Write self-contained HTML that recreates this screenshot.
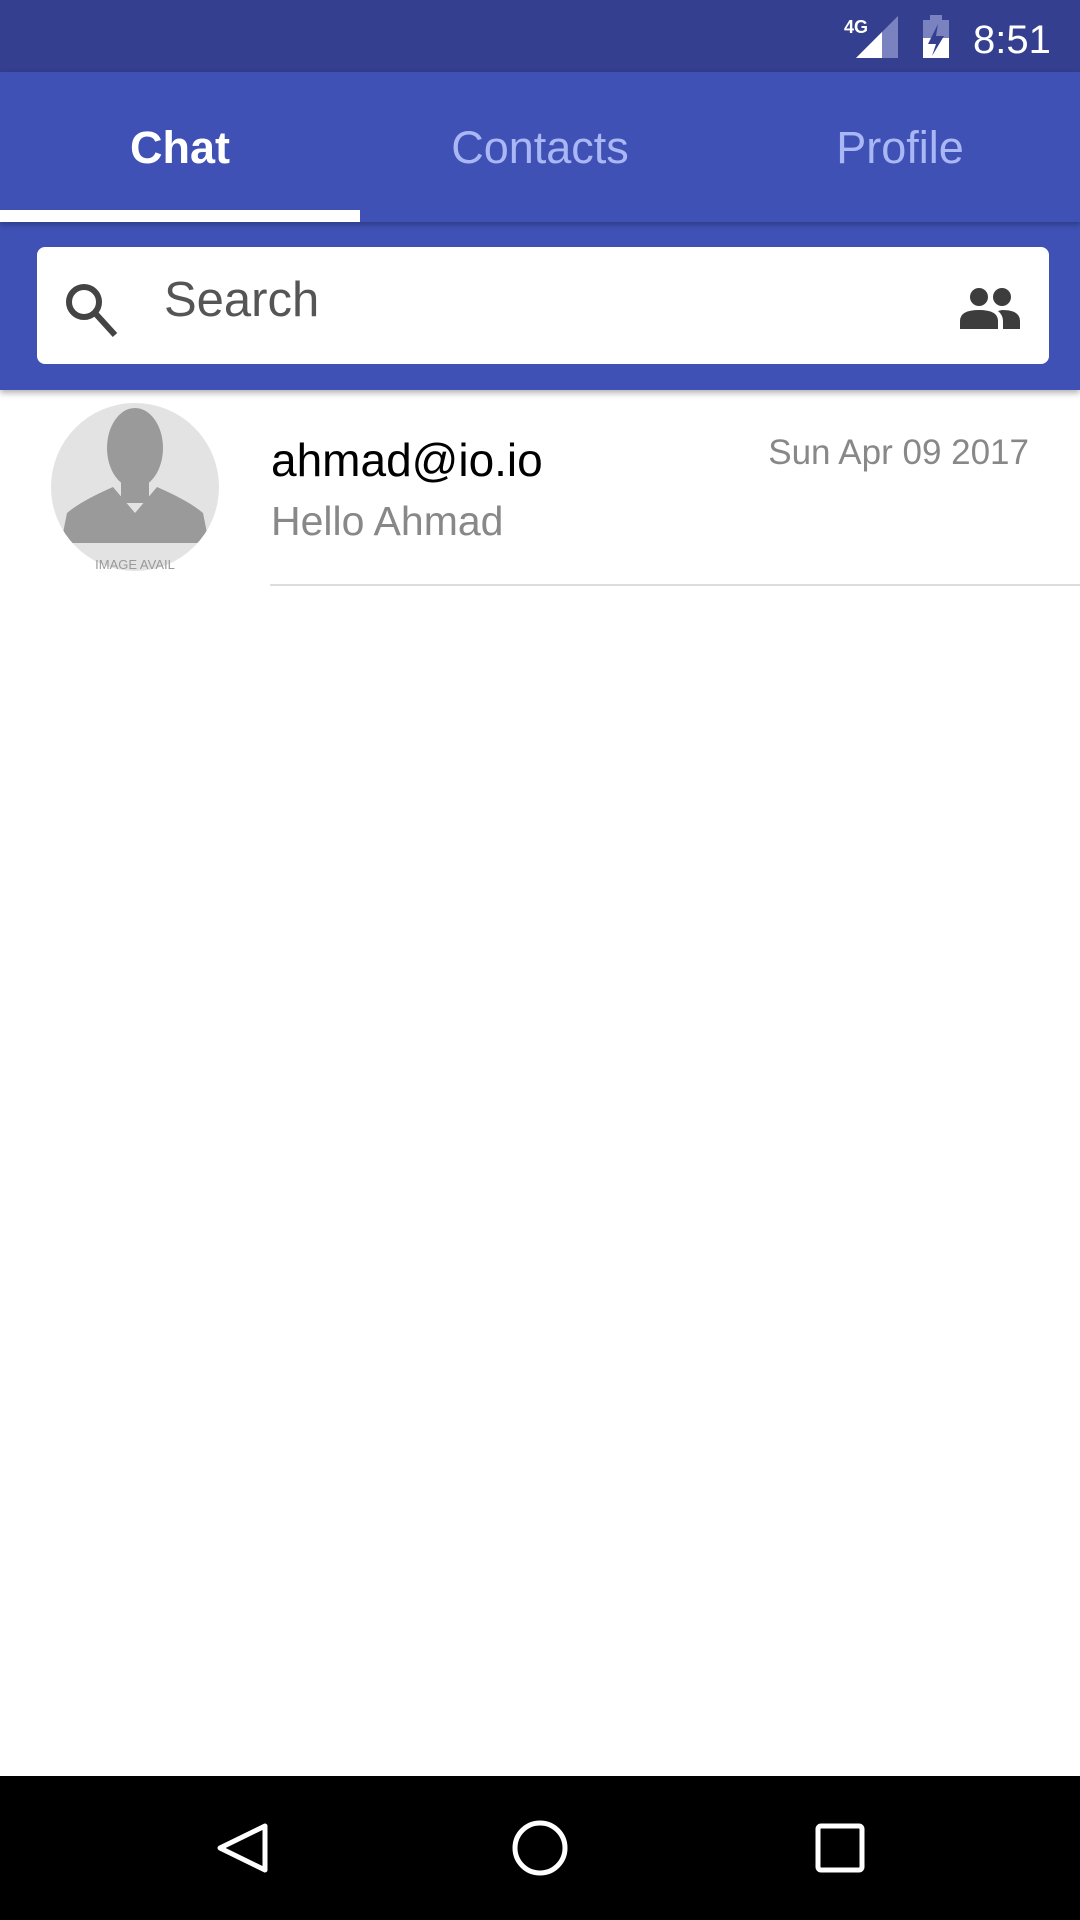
<!DOCTYPE html>
<html><head><style>
body{margin:0;width:1080px;height:1920px;position:relative;background:#fff;font-family:"Liberation Sans",sans-serif;overflow:hidden}
.a{position:absolute}
</style></head><body>
<div class="a" style="left:0;top:0;width:1080px;height:72px;background:#34408f"></div>
<svg class="a" style="left:840px;top:12px" width="230" height="50">
<text x="4" y="21" fill="#fff" font-size="18" font-weight="bold" font-family="Liberation Sans">4G</text>
<polygon points="16,46 58,4 58,46" fill="#7a83bf"/>
<polygon points="16,46 42,20 42,46" fill="#fff"/>
<rect x="83" y="8" width="26" height="38" fill="#7a83bf"/><rect x="90" y="3" width="12" height="6" fill="#7a83bf"/>
<rect x="83" y="26" width="26" height="20" fill="#fff"/>
<polygon points="98,12 88,32 96,32 92,44 104,24 96,24" fill="#34408f"/>
<text x="133" y="41" fill="#fff" font-size="40" font-family="Liberation Sans">8:51</text>
</svg>
<div class="a" style="left:0;top:72px;width:1080px;height:318px;background:#3f51b5;box-shadow:0 3px 6px rgba(0,0,0,.3)"></div>
<div class="a" style="left:0;top:72px;width:1080px;height:150px;box-shadow:0 3px 5px rgba(0,0,0,.25)"></div>
<div class="a" style="left:0;top:122px;width:360px;text-align:center;color:#fff;font-size:45px;font-weight:bold">Chat</div>
<div class="a" style="left:360px;top:122px;width:360px;text-align:center;color:#aab7f5;font-size:45px">Contacts</div>
<div class="a" style="left:720px;top:122px;width:360px;text-align:center;color:#aab7f5;font-size:45px">Profile</div>
<div class="a" style="left:0;top:210px;width:360px;height:12px;background:#fff"></div>
<div class="a" style="left:37px;top:247px;width:1012px;height:117px;background:#fff;border-radius:8px"></div>
<svg class="a" style="left:62px;top:280px" width="60" height="60"><circle cx="22" cy="22" r="15" fill="none" stroke="#444" stroke-width="6"/><line x1="33" y1="33" x2="53" y2="55" stroke="#444" stroke-width="6"/></svg>
<div class="a" style="left:164px;top:272px;color:#555;font-size:49px">Search</div>
<svg class="a" style="left:958px;top:285px" width="66" height="46"><circle cx="21" cy="12" r="9" fill="#3d3d3d"/><circle cx="44" cy="12" r="9" fill="#3d3d3d"/><path d="M2 44 V36 Q2 25 21 25 Q40 25 40 36 V44Z" fill="#3d3d3d"/><path d="M44 25 Q62 25 62 36 V44 H45 V36 Q45 30 40 26Z" fill="#3d3d3d"/></svg>
<svg class="a" style="left:51px;top:403px" width="168" height="168"><defs><clipPath id="c"><circle cx="84" cy="84" r="84"/></clipPath></defs><circle cx="84" cy="84" r="84" fill="#e3e3e3"/><g clip-path="url(#c)" fill="#9a9a9a"><ellipse cx="84" cy="45" rx="28" ry="40"/><rect x="70" y="70" width="28" height="30"/><path d="M10 140 L16 110 Q30 98 62 84 L84 110 L106 84 Q138 98 152 110 L158 140Z"/></g><text x="84" y="166" text-anchor="middle" font-size="13" fill="#999" font-family="Liberation Sans">IMAGE AVAIL</text></svg>
<div class="a" style="left:271px;top:433px;color:#000;font-size:46px">ahmad@io.io</div>
<div class="a" style="left:271px;top:498px;color:#888;font-size:41px">Hello Ahmad</div>
<div class="a" style="right:51px;top:433px;color:#888;font-size:35px">Sun Apr 09 2017</div>
<div class="a" style="left:270px;top:584px;width:810px;height:2px;background:#ddd"></div>
<div class="a" style="left:0;top:1776px;width:1080px;height:144px;background:#000"></div>
<svg class="a" style="left:0;top:1776px" width="1080" height="144">
<polygon points="265,50 265,94 220,72" fill="none" stroke="#fff" stroke-width="5" stroke-linejoin="round"/>
<circle cx="540" cy="72" r="25" fill="none" stroke="#fff" stroke-width="5"/>
<rect x="818" y="50" width="44" height="44" rx="3" fill="none" stroke="#fff" stroke-width="5"/>
</svg>
</body></html>
